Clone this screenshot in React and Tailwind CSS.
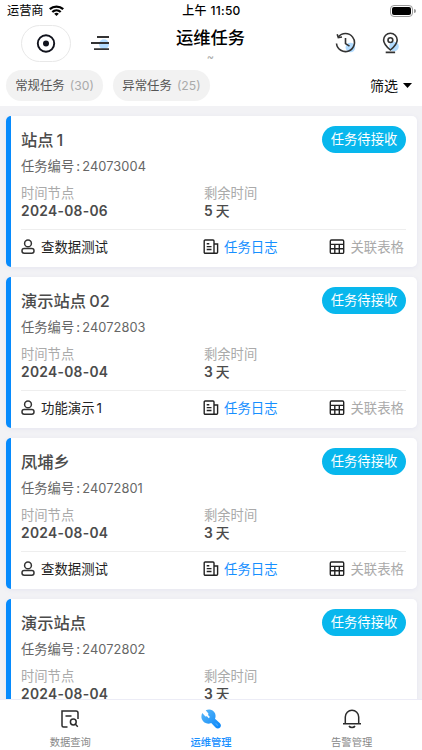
import React from "react";

const tasks = [
  { name: "站点", num: "1", code: "24073004", date: "2024-08-06", days: "5", user: "查数据测试" },
  { name: "演示站点", num: "02", code: "24072803", date: "2024-08-04", days: "3", user: "功能演示", userNum: "1" },
  { name: "凤埔乡", code: "24072801", date: "2024-08-04", days: "3", user: "查数据测试" },
  { name: "演示站点", code: "24072802", date: "2024-08-04", days: "3", user: "查数据测试" },
];

const UserIcon = () => (
  <svg className="h-4 w-[14px]" viewBox="0 0 14 16" fill="none" stroke="#333" strokeWidth="1.5">
    <circle cx="7" cy="4.4" r="3.4" />
    <rect x="1" y="9.5" width="12" height="4.7" rx="2.2" />
  </svg>
);

const LogIcon = () => (
  <svg className="h-4 w-4" viewBox="0 0 16 16" fill="none" stroke="#222" strokeWidth="1.4">
    <path d="M11 14.3H2.2a1 1 0 0 1-1-1V2a1 1 0 0 1 1-1H10a1 1 0 0 1 1 1v12.3h2.6a1 1 0 0 0 1-1V5H11" />
    <path d="M3.7 4.8h2.6M3.7 7.6h4.8M3.7 10.5h4.8" />
  </svg>
);

const TableIcon = () => (
  <svg className="h-4 w-4" viewBox="0 0 16 16" fill="none" stroke="#222" strokeWidth="1.4">
    <rect x="1.3" y="1" width="13.4" height="13.4" rx="1.2" />
    <path d="M1.3 5.4h13.4M1.3 9.8h13.4M5.8 5.4v9M10.3 5.4v9" />
  </svg>
);

const StatusBar = () => (
  <div className="grid h-[22px] grid-cols-3 items-center pl-[7px] pr-[6px] text-[12.2px] text-black">
    <div className="flex items-center gap-[5px]">
      <span>运营商</span>
      <svg className="h-[11px] w-[15px]" viewBox="0 0 15 11" fill="none" stroke="#000" strokeWidth="2.3">
        <path d="M.8 4.2a9.8 9.8 0 0 1 13.4 0M3.3 7a6.2 6.2 0 0 1 8.4 0" />
        <path d="M7.5 11 5.2 8.7a3.4 3.4 0 0 1 4.6 0z" fill="#000" stroke="none" />
      </svg>
    </div>
    <div className="text-center text-[12px] font-medium tracking-[0.3px]">上午 11:50</div>
    <div className="flex items-center justify-end gap-px">
      <div className="h-3 w-[23px] rounded-[4px] border border-[#999] p-px">
        <div className="h-full w-full rounded-[2px] bg-black" />
      </div>
      <div className="h-1 w-[1.5px] rounded-r bg-[#999]" />
    </div>
  </div>
);

const Header = () => (
  <header className="grid h-[44px] grid-cols-[154px_1fr_155px]">
    <div className="flex items-start pl-[21px] pt-[3px]">
      <div className="flex h-[37px] w-[50px] items-center justify-center rounded-full border border-[#e8e8e8]">
        <svg className="h-5 w-5" viewBox="0 0 20 20">
          <circle cx="10" cy="9.5" r="8.2" fill="none" stroke="#11131d" strokeWidth="1.9" />
          <circle cx="10" cy="9.5" r="3" fill="#11131d" />
        </svg>
      </div>
      <svg className="ml-[19px] mt-[9px] h-[18px] w-[20px]" viewBox="0 0 20 18">
        <circle cx="14" cy="10.3" r="5" fill="#b3dcff" />
        <path d="M7 3h12M1 9h18M4 15.2h15" stroke="#333" strokeWidth="1.8" />
      </svg>
    </div>
    <div className="flex flex-col items-center pt-[3px]">
      <h1 className="text-[17.3px] leading-[25px] font-medium text-black">运维任务</h1>
      <span className="text-[11px] leading-[14px] text-[#aaa]">~</span>
    </div>
    <div className="flex items-start justify-end gap-[24px] pr-[22px] pt-[10px]">
      <svg className="h-[22px] w-[22px]" viewBox="0 0 22 22" fill="none" stroke="#333" strokeWidth="1.6">
        <circle cx="16.4" cy="15.5" r="4.8" fill="#b3dcff" stroke="none" />
        <path d="M4.3 5.1A9 9 0 1 1 2.5 11.5" />
        <path d="M3.2 2.2 4.3 5.6 8 5M11.5 6v5.6l4 2.6" />
      </svg>
      <svg className="h-[22px] w-[20px]" viewBox="0 0 20 22" fill="none" stroke="#333" strokeWidth="1.6">
        <circle cx="14" cy="14.5" r="4.8" fill="#b3dcff" stroke="none" />
        <path d="M10.4 18C6.4 14.7 3.6 11.6 3.6 8a6.8 6.8 0 0 1 13.6 0c0 3.6-2.8 6.7-6.8 10zM5.7 20.4h9.4" />
        <circle cx="10.4" cy="8.1" r="2.4" />
      </svg>
    </div>
  </header>
);

const Filters = () => (
  <div className="flex h-10 items-start pl-[6px] pr-[10px] pt-[4px]">
    <div className="flex h-[31px] w-[97px] shrink-0 items-center justify-center gap-[5px] rounded-full bg-[#f2f2f2] pt-px text-[12.4px] text-[#555]">
      常规任务<span className="text-[12.2px] text-[#aaa]">(30)</span>
    </div>
    <div className="ml-[10px] flex h-[31px] w-[97px] shrink-0 items-center justify-center gap-[5px] rounded-full bg-[#f2f2f2] pt-px text-[12.4px] text-[#555]">
      异常任务<span className="text-[12.2px] text-[#aaa]">(25)</span>
    </div>
    <div className="ml-auto flex h-[31px] items-center gap-[5px] text-[14px] text-[#111]">
      筛选
      <svg className="h-[5px] w-[9px]" viewBox="0 0 9 5">
        <path d="M0 0h9L4.5 5z" />
      </svg>
    </div>
  </div>
);

const TaskCard = ({ task }) => (
  <article className="h-[151px] shrink-0 overflow-hidden rounded-[5px] border-l-[5px] border-[#078bfd] bg-white pl-[10.5px] pr-[10.5px] pt-[10px] shadow-[0_1px_4px_#e5e5f0]">
    <div className="flex h-[27px] items-center justify-between">
      <h2 className="flex gap-[3px] pt-px text-[16.3px] font-medium text-[#4b4b4b]">
        {task.name}
        {task.num && <span>{task.num}</span>}
      </h2>
      <span className="flex h-[27px] w-[84px] items-center justify-center rounded-full bg-[#08b7ed] pt-px text-[13.3px] text-white">
        任务待接收
      </span>
    </div>
    <p className="mt-[4px] flex h-5 items-center text-[13.3px] text-[#666]">
      任务编号<span className="w-[8px] text-center">:</span>
      <span className="text-[12.8px] tracking-[0.1px]">{task.code}</span>
    </p>
    <div className="mt-[7px] flex text-[13.3px] leading-[18px]">
      <div className="w-[183px]">
        <p className="text-[#aaa]">时间节点</p>
        <p className="text-[13.8px] font-semibold tracking-[0.3px] text-[#4b4b4b]">{task.date}</p>
      </div>
      <div>
        <p className="text-[#aaa]">剩余时间</p>
        <p className="flex gap-[3px] text-[13.8px] font-medium text-[#4b4b4b]">
          <span className="font-semibold">{task.days}</span>天
        </p>
      </div>
    </div>
    <div className="mt-[9px] flex h-[35px] items-center border-t border-[#eee] text-[13.4px]">
      <div className="flex w-[182px] items-center gap-[6px] text-[#222]">
        <UserIcon />
        <span className="flex gap-[2px]">{task.user}{task.userNum && <span>{task.userNum}</span>}</span>
      </div>
      <div className="flex items-center gap-[5px] text-[#168fff]">
        <LogIcon />
        任务日志
      </div>
      <div className="ml-auto mr-[2px] flex items-center gap-[5px] text-[#aaa]">
        <TableIcon />
        关联表格
      </div>
    </div>
  </article>
);

const TabBar = () => (
  <nav className="grid h-[51px] shrink-0 grid-cols-3 border-t border-[#ececf6] bg-white text-[10.3px] text-[#888]">
    <div className="flex flex-col items-center pt-[9px]">
      <svg className="h-5 w-5" viewBox="0 0 20 20" fill="none" stroke="#2b2b2b" strokeWidth="1.5">
        <path d="M7.5 18H3.5a1.5 1.5 0 0 1-1.5-1.5V2h14a2 2 0 0 1 2 2v6M5.5 7h6" />
        <circle cx="13.3" cy="13" r="2.9" />
        <path d="m15.4 15.3 2.4 2.4" />
      </svg>
      <span className="mt-[5px] leading-4">数据查询</span>
    </div>
    <div className="flex flex-col items-center pt-[9px] text-[#168fff]">
      <svg className="h-5 w-5" viewBox="0 0 20 20">
        <defs>
          <linearGradient id="wrench" x1="0" y1="0" x2="1" y2="1">
            <stop offset="0" stopColor="#5bb8f7" />
            <stop offset="1" stopColor="#0785fa" />
          </linearGradient>
        </defs>
        <path fill="url(#wrench)" d="M4.7 1.3C8.2-.6 12.5.7 14 4.3c.8 1.9.7 3.8 0 5.5l4.7 4.2c1.5 1.3 1.6 3.3.4 4.6s-3.3 1.3-4.6 0l-4.3-4.5C6.4 15.6 2.3 14 .9 10.3c-.9-2.3-.5-4.5.4-6.2l3.1 3.4 1.5-.2 1.8 2 1.2-1.2-1.8-2 .3-1.6z" />
        <path d="m14.9 14.7 1.7 1.7" stroke="#45a8fc" strokeWidth="1.2" strokeLinecap="round" />
      </svg>
      <span className="mt-[5px] font-medium leading-4">运维管理</span>
    </div>
    <div className="flex flex-col items-center pt-[9px]">
      <svg className="h-5 w-5" viewBox="0 0 20 20" fill="none" stroke="#2b2b2b" strokeWidth="1.5">
        <path d="M3.3 14.5V8a6.7 6.7 0 0 1 13.4 0v6.5M1 14.7h18M7 17c1.2 2 4.8 2 6 0" />
      </svg>
      <span className="mt-[5px] leading-4">告警管理</span>
    </div>
  </nav>
);

export default function App() {
  return (
    <div className="flex h-[750px] w-[422px] flex-col overflow-hidden bg-white font-[Inter,'Noto_Sans_CJK_SC',sans-serif]">
      <StatusBar />
      <Header />
      <Filters />
      <main className="flex min-h-0 flex-1 flex-col gap-[10px] overflow-hidden bg-[#f2f2f5] pl-[5.5px] pr-[5.5px] pt-[10px]">
        {tasks.map((task) => (
          <TaskCard key={task.code} task={task} />
        ))}
      </main>
      <TabBar />
    </div>
  );
}
